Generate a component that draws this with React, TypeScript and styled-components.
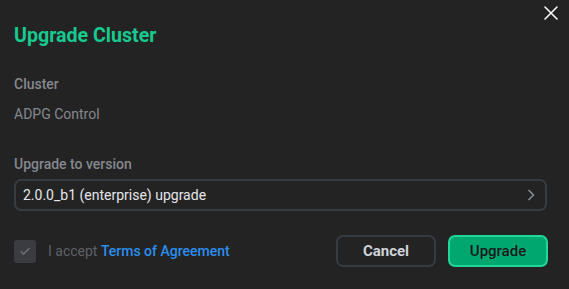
import React from "react";
import styled, { createGlobalStyle } from "styled-components";

const Global = createGlobalStyle`
  html, body { margin: 0; padding: 0; background: #232323; }
  body { font-family: Roboto, "Noto Sans", sans-serif; }
  * { box-sizing: border-box; }
`;

const Dialog = styled.div`
  position: relative;
  width: 569px;
  height: 289px;
  background: #232323;
  padding: 24px 21px 0 14px;
  display: flex;
  flex-direction: column;
`;

const CloseButton = styled.button`
  position: absolute;
  top: 5px;
  right: 10px;
  width: 16px;
  height: 16px;
  padding: 0;
  border: 0;
  background: transparent;
  display: flex;
  align-items: center;
  justify-content: center;
  cursor: pointer;
`;

const Title = styled.h1`
  margin: 0;
  font-size: 19.6px;
  line-height: 24px;
  font-weight: 700;
  color: #18c98f;
`;

const Field = styled.div<{ $top: number }>`
  margin-top: ${(p) => p.$top}px;
  display: flex;
  flex-direction: column;
`;

const Label = styled.div`
  font-size: 14px;
  line-height: 20px;
  font-weight: 500;
  color: #85888e;
`;

const Value = styled.div`
  margin-top: 10px;
  font-size: 14px;
  line-height: 20px;
  font-weight: 400;
  color: #85888e;
`;

const Select = styled.button`
  margin-top: 5px;
  height: 32px;
  width: calc(100% - 1px);
  border: 2px solid #363a42;
  border-radius: 7px;
  background: #232323;
  padding: 0 10px 0 7px;
  display: flex;
  align-items: center;
  justify-content: space-between;
  font-family: Roboto, sans-serif;
  font-size: 14px;
  line-height: 20px;
  color: #e4e6ea;
  cursor: pointer;
`;

const Footer = styled.div`
  margin-top: 24px;
  display: flex;
  align-items: center;
  justify-content: space-between;
`;

const Accept = styled.label`
  display: flex;
  align-items: center;
  gap: 12px;
  font-size: 14px;
  line-height: 20px;
  color: #5e6168;
`;

const Box = styled.span`
  width: 22px;
  height: 23px;
  border-radius: 3px;
  background: #3a3c42;
  display: flex;
  align-items: center;
  justify-content: center;
`;

const Link = styled.a`
  color: #2b8ef0;
  font-weight: 500;
  text-decoration: none;
`;

const Buttons = styled.div`
  display: flex;
  gap: 12px;
`;

const Button = styled.button<{ $primary?: boolean }>`
  width: 100px;
  height: 32px;
  border-radius: 7px;
  border: 2px solid ${(p) => (p.$primary ? "#1fd69b" : "#363a42")};
  background: ${(p) => (p.$primary ? "#00a870" : "transparent")};
  color: ${(p) => (p.$primary ? "#15191c" : "#cfd3da")};
  font-family: Roboto, sans-serif;
  font-size: 15px;
  font-weight: ${(p) => (p.$primary ? 500 : 700)};
  cursor: pointer;
`;

export default function App() {
  return (
    <>
      <Global />
      <Dialog>
        <CloseButton aria-label="Close">
          <svg width="14" height="14" viewBox="0 0 14 14">
            <path d="M1 1 L13 13 M13 1 L1 13" stroke="#ffffff" strokeWidth="1.5" strokeLinecap="round" />
          </svg>
        </CloseButton>
        <Title>Upgrade Cluster</Title>
        <Field $top={26}>
          <Label>Cluster</Label>
          <Value>ADPG Control</Value>
        </Field>
        <Field $top={30}>
          <Label>Upgrade to version</Label>
          <Select>
            <span>2.0.0_b1 (enterprise) upgrade</span>
            <svg width="8" height="12" viewBox="0 0 8 12">
              <path d="M1.5 1 L6.5 6 L1.5 11" fill="none" stroke="#8a8d93" strokeWidth="1.5" />
            </svg>
          </Select>
        </Field>
        <Footer>
          <Accept>
            <Box>
              <svg width="12" height="10" viewBox="0 0 12 10">
                <path d="M1.5 5 L4.5 8 L10.5 2" fill="none" stroke="#6c6f76" strokeWidth="1.6" />
              </svg>
            </Box>
            <span>
              I accept <Link href="#">Terms of Agreement</Link>
            </span>
          </Accept>
          <Buttons>
            <Button>Cancel</Button>
            <Button $primary>Upgrade</Button>
          </Buttons>
        </Footer>
      </Dialog>
    </>
  );
}
